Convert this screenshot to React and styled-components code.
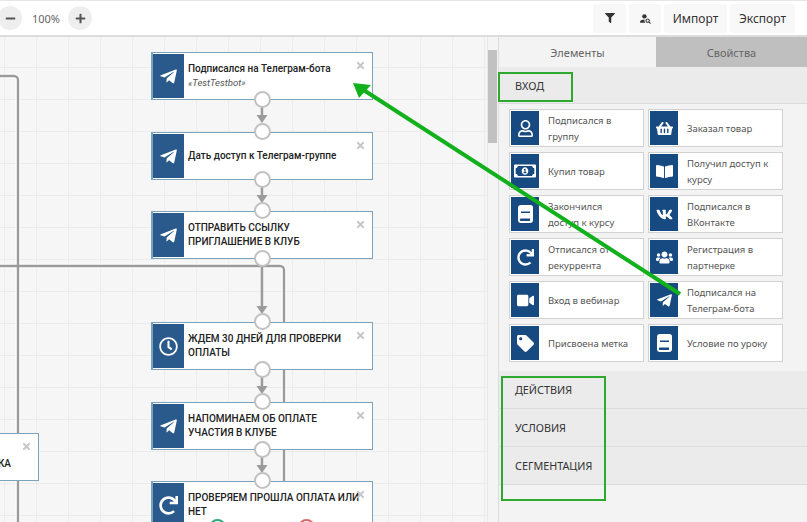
import React from "react";
import styled, { createGlobalStyle } from "styled-components";
import {
  FaBookOpen,
  FaFilter,
  FaMinus,
  FaPlus,
  FaRedo,
  FaRegClock,
  FaRegMoneyBillAlt,
  FaRegUser,
  FaShoppingBasket,
  FaTag,
  FaTelegramPlane,
  FaTimes,
  FaUsers,
  FaVideo,
  FaVk,
} from "react-icons/fa";
import { MdPersonSearch } from "react-icons/md";

const Global = createGlobalStyle`
  html, body { margin: 0; padding: 0; background: #fff; }
  * { box-sizing: border-box; }
`;

const Page = styled.div`
  position: relative;
  width: 807px;
  height: 522px;
  overflow: hidden;
  display: flex;
  flex-direction: column;
  font-family: "Noto Sans", sans-serif;
  background: #fff;
`;

const Toolbar = styled.div`
  height: 37px;
  flex: none;
  display: flex;
  align-items: center;
  padding: 0 12px 0 0;
  border-top: 1px solid #e6e6e6;
  border-bottom: 2px solid #dcdcdc;
  background: #fff;
`;

const RoundBtn = styled.div`
  width: 24px;
  height: 24px;
  border-radius: 50%;
  background: #eeeeee;
  color: #555;
  display: flex;
  align-items: center;
  justify-content: center;
  font-size: 11px;
  margin-left: ${(p) => p.$ml}px;
`;

const Zoom = styled.span`
  width: 48px;
  text-align: center;
  font-size: 11px;
  color: #666;
`;

const Spacer = styled.div`
  flex: 1;
`;

const ToolBtn = styled.div`
  height: 29px;
  width: ${(p) => p.$w}px;
  margin-left: 3px;
  background: #f8f8f8;
  border-radius: 3px;
  display: flex;
  align-items: center;
  justify-content: center;
  font-size: 12px;
  color: #333;
`;

const Main = styled.div`
  flex: 1;
  display: flex;
  min-height: 0;
`;

const Canvas = styled.div`
  position: relative;
  width: 487px;
  flex: none;
  overflow: hidden;
  background-color: #f6f6f6;
  background-image: linear-gradient(#ececec 1px, transparent 1px),
    linear-gradient(90deg, #ececec 1px, transparent 1px);
  background-size: 32px 32px;
  background-position: 4px 30px;
`;

const Wires = styled.svg`
  position: absolute;
  left: 0;
  top: -37px;
  width: 487px;
  height: 522px;
`;

const Node = styled.div`
  position: absolute;
  left: ${(p) => p.$x}px;
  top: ${(p) => p.$y - 37}px;
  width: 222px;
  height: ${(p) => p.$h || 48}px;
  background: #fff;
  border: 1px solid #7ba3bb;
  border-left-width: 2px;
  font-family: "Roboto", sans-serif;
  font-size: 10px;
  font-weight: 500;
  line-height: 14.5px;
  color: #222;
`;

const NodeIcon = styled.div`
  position: absolute;
  left: 0;
  top: 1px;
  width: 31px;
  height: 44px;
  background: #2a5a8c;
  color: #fff;
  font-size: 19px;
  display: flex;
  align-items: center;
  justify-content: center;
`;

const NodeText = styled.div`
  height: 46px;
  margin-left: 35px;
  display: flex;
  flex-direction: column;
  justify-content: center;
  white-space: pre-line;
`;

const NodeSub = styled.i`
  font-weight: 400;
  font-size: 9.500px;
  color: #555;
`;

const Tail = styled.span`
  text-align: right;
  padding-right: 27px;
`;

const Close = styled.div`
  position: absolute;
  right: 6px;
  top: 7px;
  color: #c6c6c6;
  font-size: 11px;
  line-height: 11px;
`;

const Port = styled.div`
  position: absolute;
  left: ${(p) => p.$x || 101}px;
  top: ${(p) => p.$y}px;
  width: 17px;
  height: 17px;
  border-radius: 50%;
  background: #fff;
  border: 2px solid ${(p) => p.$color || "#c2c2c2"};
`;

const ScrollTrack = styled.div`
  position: relative;
  width: 11px;
  flex: none;
  background: #f4f4f4;
  border-left: 1px solid #e8e8e8;
`;

const ScrollThumb = styled.div`
  position: absolute;
  left: 0;
  right: 1px;
  top: 13px;
  height: 93px;
  background: #c1c1c1;
`;

const Side = styled.div`
  flex: 1;
  display: flex;
  flex-direction: column;
  background: #f3f3f3;
  border-left: 1px solid #dcdcdc;
`;

const Tabs = styled.div`
  height: 30px;
  flex: none;
  display: flex;
`;

const Tab = styled.div`
  flex: ${(p) => p.$grow};
  display: flex;
  align-items: center;
  justify-content: center;
  font-size: 11px;
  color: #666;
  background: ${(p) => (p.$active ? "#f3f3f3" : "#bfbfbf")};
`;

const Section = styled.div`
  height: ${(p) => p.$h || 38}px;
  flex: none;
  display: flex;
  align-items: center;
  padding-left: 16px;
  font-size: 10.800px;
  color: #333;
  background: #ebebeb;
  border-bottom: 1px solid #dcdcdc;
`;

const Items = styled.div`
  display: grid;
  grid-template-columns: 135px 135px;
  grid-auto-rows: 38px;
  gap: 5px 4px;
  padding: 5px 0 9px 10px;
`;

const Item = styled.div`
  display: flex;
  align-items: center;
  background: #fff;
  border: 1px solid #d2d2d2;
  padding: 1px;
`;

const ItemIcon = styled.div`
  width: 28px;
  height: 100%;
  flex: none;
  background: #164a80;
  color: #fff;
  font-size: 17px;
  display: flex;
  align-items: center;
  justify-content: center;
`;

const ItemText = styled.div`
  margin-left: 9px;
  padding-top: 1px;
  font-size: 9.500px;
  line-height: 16px;
  color: #555;
  white-space: pre-line;
`;

const Mark = styled.div`
  position: absolute;
  left: ${(p) => p.$x}px;
  top: ${(p) => p.$y}px;
  width: ${(p) => p.$w}px;
  height: ${(p) => p.$h}px;
  border: 2px solid #2fa82f;
`;

const Arrow = styled.svg`
  position: absolute;
  left: 0;
  top: 0;
  width: 807px;
  height: 522px;
  pointer-events: none;
`;

function BookIcon() {
  return (
    <svg width="15" height="18" viewBox="0 0 15 18">
      <path
        fill="#fff"
        fillRule="evenodd"
        d="M3 0h9.500A2.500 2.500 0 0 1 15 2.500V15a3 3 0 0 1-3 3H3a3 3 0 0 1-3-3V3a3 3 0 0 1 3-3zM3 6.500v1.500h9V6.500zM3 13.500a1.200 1.200 0 0 0 0 2.400h9v-2.400z"
      />
    </svg>
  );
}

const MoneyIcon = () => <FaRegMoneyBillAlt size={22} />;

const items = [
  [FaRegUser, "Подписался в\nгруппу"],
  [FaShoppingBasket, "Заказал товар"],
  [MoneyIcon, "Купил товар"],
  [FaBookOpen, "Получил доступ к\nкурсу"],
  [BookIcon, "Закончился\nдоступ к курсу"],
  [FaVk, "Подписался в\nВКонтакте"],
  [FaRedo, "Отписался от\nрекуррента"],
  [FaUsers, "Регистрация в\nпартнерке"],
  [FaVideo, "Вход в вебинар"],
  [FaTelegramPlane, "Подписался на\nТелеграм-бота"],
  [FaTag, "Присвоена метка"],
  [BookIcon, "Условие по уроку"],
];

function FlowNode({ y, icon: Icon, title, sub, top, bottom = true, h, children }) {
  return (
    <Node $x={151} $y={y} $h={h}>
      <NodeIcon>
        <Icon />
      </NodeIcon>
      <NodeText>
        <span>{title}</span>
        {sub && <NodeSub>{sub}</NodeSub>}
      </NodeText>
      <Close>
        <FaTimes />
      </Close>
      {top && <Port $y={-10} />}
      {bottom && <Port $y={38} />}
      {children}
    </Node>
  );
}

export default function App() {
  return (
    <Page>
      <Global />
      <Toolbar>
        <RoundBtn $ml={-2}>
          <FaMinus />
        </RoundBtn>
        <Zoom>100%</Zoom>
        <RoundBtn $ml={-2}>
          <FaPlus />
        </RoundBtn>
        <Spacer />
        <ToolBtn $w={33}>
          <FaFilter size={10} />
        </ToolBtn>
        <ToolBtn $w={32}>
          <MdPersonSearch size={13} />
        </ToolBtn>
        <ToolBtn $w={63}>Импорт</ToolBtn>
        <ToolBtn $w={65}>Экспорт</ToolBtn>
      </Toolbar>
      <Main>
        <Canvas>
          <Wires viewBox="0 0 487 522" fill="none">
            <g stroke="#fff" strokeWidth="5" opacity="0.8">
              <path d="M-2 76H14a4 4 0 0 1 4 4V522" />
              <path d="M-2 266H280a4 4 0 0 1 4 4V490" />
            </g>
            <g stroke="#9b9b9b" strokeWidth="2.4">
              <path d="M-2 76H14a4 4 0 0 1 4 4V522" />
              <path d="M-2 266H280a4 4 0 0 1 4 4V490" />
              <path d="M262 104V118M262 183V198M262 262V310M262 373V388M262 453V468" />
            </g>
            <g fill="#9b9b9b">
              <path d="M256.500 115h11l-5.500 8zM256.500 195h11l-5.500 8zM256.500 306h11l-5.500 8zM256.500 386h11l-5.500 8zM256.500 465h11l-5.500 8z" />
            </g>
          </Wires>
          <FlowNode y={52} icon={FaTelegramPlane} title="Подписался на Телеграм-бота" sub="«TestTestbot»" />
          <FlowNode y={132} icon={FaTelegramPlane} title="Дать доступ к Телеграм-группе" top />
          <FlowNode y={211} icon={FaTelegramPlane} title={"ОТПРАВИТЬ ССЫЛКУ\nПРИГЛАШЕНИЕ В КЛУБ"} top />
          <FlowNode y={322} icon={FaRegClock} title={"ЖДЕМ 30 ДНЕЙ ДЛЯ ПРОВЕРКИ\nОПЛАТЫ"} top />
          <FlowNode y={402} icon={FaTelegramPlane} title={"НАПОМИНАЕМ ОБ ОПЛАТЕ\nУЧАСТИЯ В КЛУБЕ"} top />
          <FlowNode y={481} h={90} icon={FaRedo} title={"ПРОВЕРЯЕМ ПРОШЛА ОПЛАТА ИЛИ\nНЕТ"} top bottom={false}>
            <Port $x={56} $y={37} $color="#2aa876" />
            <Port $x={145} $y={37} $color="#d9686b" />
          </FlowNode>
          <Node $x={-183} $y={433}>
            <NodeText>
              <span>&nbsp;</span>
              <Tail>КА</Tail>
            </NodeText>
            <Close>
              <FaTimes />
            </Close>
          </Node>
        </Canvas>
        <ScrollTrack>
          <ScrollThumb />
        </ScrollTrack>
        <Side>
          <Tabs>
            <Tab $grow={157} $active>
              Элементы
            </Tab>
            <Tab $grow={151}>Свойства</Tab>
          </Tabs>
          <Section $h={37}>ВХОД</Section>
          <Items>
            {items.map(([Icon, label]) => (
              <Item key={label}>
                <ItemIcon>
                  <Icon />
                </ItemIcon>
                <ItemText>{label}</ItemText>
              </Item>
            ))}
          </Items>
          <Section>ДЕЙСТВИЯ</Section>
          <Section>УСЛОВИЯ</Section>
          <Section>СЕГМЕНТАЦИЯ</Section>
        </Side>
      </Main>
      <Mark $x={498} $y={72} $w={75} $h={30} />
      <Mark $x={501} $y={376} $w={105} $h={125} />
      <Arrow viewBox="0 0 807 522">
        <path d="M680 294L362 89" stroke="#12b01c" strokeWidth="4" fill="none" />
        <path d="M353 83L371 85L359 98Z" fill="#12b01c" />
      </Arrow>
    </Page>
  );
}
